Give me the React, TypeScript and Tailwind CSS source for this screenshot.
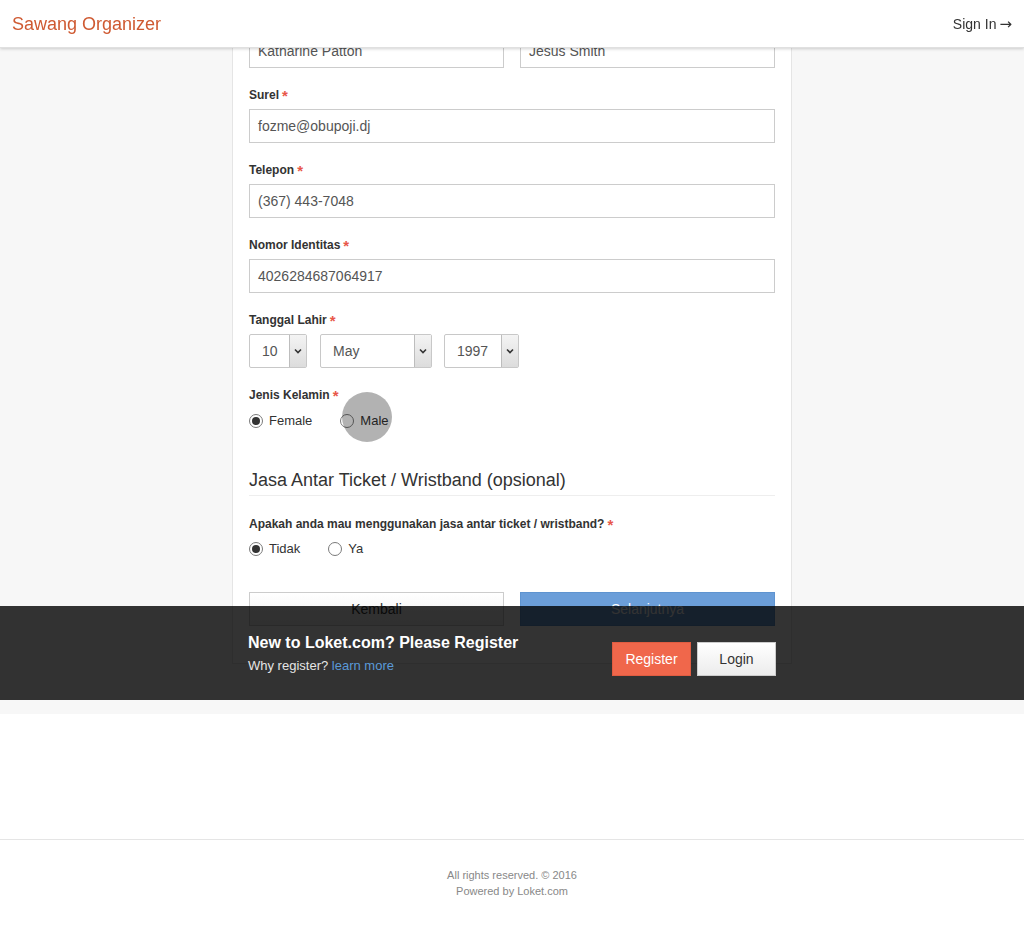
import React from "react";

const font = { fontFamily: '"Liberation Sans", Arial, sans-serif' };

function Label({ children }: { children: React.ReactNode }) {
  return (
    <div className="h-[16px] leading-[17px] text-[12px] font-bold text-[#333] mb-[6px] flex items-start">
      <span>{children}</span>
      <span className="ml-[3px] text-[#e8574a] text-[15px] leading-[17px] font-bold">*</span>
    </div>
  );
}

function TextInput({ value }: { value: string }) {
  return (
    <div className="h-[34px] border border-[#ccc] bg-white pl-[8px] flex items-center text-[14px] text-[#555]">
      {value}
    </div>
  );
}

function Select({ value, width }: { value: string; width: string }) {
  return (
    <div className={`h-[34px] border border-[#c8c8c8] rounded-[2px] bg-white flex items-stretch text-[14px] text-[#555] ${width}`}>
      <div className="flex-1 flex items-center pl-[12px]">{value}</div>
      <div className="w-[17px] border-l border-[#bdbdbd] bg-gradient-to-b from-[#f4f4f4] to-[#dcdcdc] flex items-center justify-center">
        <svg width="8" height="6" viewBox="0 0 8 6">
          <path d="M1 1.5 L4 4.5 L7 1.5" stroke="#333" strokeWidth="1.6" fill="none" />
        </svg>
      </div>
    </div>
  );
}

function Radio({ checked, label }: { checked?: boolean; label: string }) {
  return (
    <div className="flex items-center">
      <span className="w-[14px] h-[14px] rounded-full border border-[#7a7a7a] bg-white flex items-center justify-center">
        {checked && <span className="w-[8px] h-[8px] rounded-full bg-[#333]" />}
      </span>
      <span className="ml-[6px] text-[13px] text-[#333]">{label}</span>
    </div>
  );
}

export default function App() {
  return (
    <div className="relative min-h-[928px] bg-white" style={font}>
      {/* Header */}
      <header className="fixed top-0 left-0 right-0 h-[48px] bg-white z-20 shadow-[0_1px_3px_rgba(0,0,0,0.18)] border-b border-[#e0e0e0] flex items-center justify-between pl-[12px] pr-[12px] pt-[1px]">
        <div className="text-[18px] text-[#cf5a32]">Sawang Organizer</div>
        <div className="text-[14px] text-[#333] flex items-center">
          Sign In <span className="ml-[3px] text-[15px]" style={{ fontFamily: '"DejaVu Sans", sans-serif' }}>→</span>
        </div>
      </header>

      {/* Main */}
      <main className="bg-[#f7f7f7] pb-[50px]">
        <div className="w-[560px] mx-auto bg-white border-x border-b border-[#e5e5e5] px-[16px] pt-[34px] pb-[37px]">
          <div className="grid grid-cols-2 gap-[16px] mb-[19px]">
            <TextInput value="Katharine Patton" />
            <TextInput value="Jesus Smith" />
          </div>

          <div className="mb-[19px]">
            <Label>Surel</Label>
            <TextInput value="fozme@obupoji.dj" />
          </div>
          <div className="mb-[19px]">
            <Label>Telepon</Label>
            <TextInput value="(367) 443-7048" />
          </div>
          <div className="mb-[19px]">
            <Label>Nomor Identitas</Label>
            <TextInput value="4026284687064917" />
          </div>
          <div className="mb-[19px]">
            <Label>Tanggal Lahir</Label>
            <div className="flex">
              <Select value="10" width="w-[58px]" />
              <div className="ml-[13px]"><Select value="May" width="w-[112px]" /></div>
              <div className="ml-[12px]"><Select value="1997" width="w-[75px]" /></div>
            </div>
          </div>
          <div>
            <Label>Jenis Kelamin</Label>
            <div className="relative flex items-center h-[16px] mt-[10px] gap-[28px]">
              <Radio checked label="Female" />
              <Radio label="Male" />
              <span className="absolute left-[93px] top-[-21px] w-[50px] h-[50px] rounded-full bg-black/30" />
            </div>
          </div>

          <div className="mt-[41px] border-b border-[#eee] pb-[5px]">
            <h3 className="text-[18px] leading-[20px] text-[#333]">Jasa Antar Ticket / Wristband (opsional)</h3>
          </div>

          <div className="mt-[20px]">
            <Label>Apakah anda mau menggunakan jasa antar ticket / wristband?</Label>
            <div className="flex items-center h-[16px] mt-[9px] gap-[28px]">
              <Radio checked label="Tidak" />
              <Radio label="Ya" />
            </div>
          </div>

          <div className="grid grid-cols-2 gap-[16px] mt-[35px]">
            <div className="h-[34px] border border-[#ccc] bg-gradient-to-b from-white to-[#efefef] flex items-center justify-center text-[14px] text-[#333]">
              Kembali
            </div>
            <div className="h-[34px] border border-[#5f94d0] bg-[#6b9ed9] flex items-center justify-center text-[14px] text-white">
              Selanjutnya
            </div>
          </div>
        </div>
      </main>

      {/* Footer */}
      <footer className="mt-[125px] border-t border-[#e5e5e5] pt-[27px] pb-[29px] text-center text-[11px] leading-[16px] text-[#888]">
        <div>All rights reserved. © 2016</div>
        <div>Powered by Loket.com</div>
      </footer>

      {/* Register overlay */}
      <div className="absolute left-0 right-0 top-[606px] h-[94px] bg-black/80 z-10">
        <div className="w-[528px] mx-auto flex items-start justify-between h-full pt-[27px]">
          <div>
            <div className="text-[16px] font-bold text-white leading-[20px]">New to Loket.com? Please Register</div>
            <div className="text-[13px] text-[#e5e5e5] mt-[5px] leading-[16px]">
              Why register? <span className="text-[#5b9ad8]">learn more</span>
            </div>
          </div>
          <div className="flex gap-[6px] mt-[9px]">
            <div className="w-[79px] h-[34px] bg-[#f0674b] border border-[#e05c41] text-white text-[14px] flex items-center justify-center">
              Register
            </div>
            <div className="w-[79px] h-[34px] bg-gradient-to-b from-white to-[#ececec] border border-[#ccc] text-[#333] text-[14px] flex items-center justify-center">
              Login
            </div>
          </div>
        </div>
      </div>
    </div>
  );
}
